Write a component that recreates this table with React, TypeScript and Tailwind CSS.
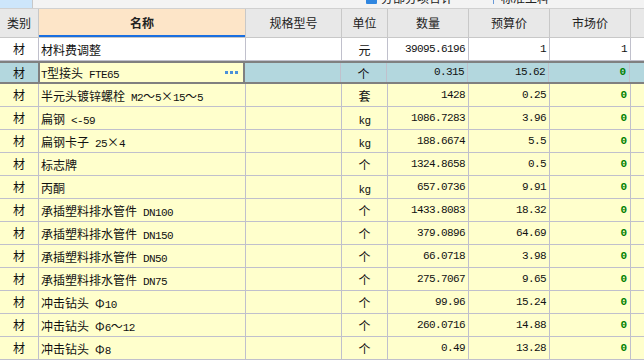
import React from "react";

const cjk = "font-['Noto_Sans_CJK_SC',sans-serif]";
const mono = "font-['Liberation_Mono','Noto_Sans_CJK_SC',monospace]";

type Row = {
  name: string;
  unit: string;
  qty: string;
  price: string;
  market: string;
  kind?: "white" | "sel";
};

const rows: Row[] = [
  { name: "材料费调整", unit: "元", qty: "39095.6196", price: "1", market: "1", kind: "white" },
  { name: "T型接头 FTE65", unit: "个", qty: "0.315", price: "15.62", market: "0", kind: "sel" },
  { name: "半元头镀锌螺栓 M2～5×15～5", unit: "套", qty: "1428", price: "0.25", market: "0" },
  { name: "扁钢 <-59", unit: "kg", qty: "1086.7283", price: "3.96", market: "0" },
  { name: "扁钢卡子 25×4", unit: "kg", qty: "188.6674", price: "5.5", market: "0" },
  { name: "标志牌", unit: "个", qty: "1324.8658", price: "0.5", market: "0" },
  { name: "丙酮", unit: "kg", qty: "657.0736", price: "9.91", market: "0" },
  { name: "承插塑料排水管件 DN100", unit: "个", qty: "1433.8083", price: "18.32", market: "0" },
  { name: "承插塑料排水管件 DN150", unit: "个", qty: "379.0896", price: "64.69", market: "0" },
  { name: "承插塑料排水管件 DN50", unit: "个", qty: "66.0718", price: "3.98", market: "0" },
  { name: "承插塑料排水管件 DN75", unit: "个", qty: "275.7067", price: "9.65", market: "0" },
  { name: "冲击钻头 Φ10", unit: "个", qty: "99.96", price: "15.24", market: "0" },
  { name: "冲击钻头 Φ6～12", unit: "个", qty: "260.0716", price: "14.88", market: "0" },
  { name: "冲击钻头 Φ8", unit: "个", qty: "0.49", price: "13.28", market: "0" },
];

function Mixed({ text }: { text: string }) {
  const parts = text.match(/[\x20-\x7e]+|[^\x20-\x7e]+/g) || [];
  return (
    <span className="whitespace-pre leading-none">
      {parts.map((p, i) =>
        /^[\x20-\x7e]+$/.test(p) ? (
          <span key={i} className={`${mono} text-[11px] tracking-[-0.6px]`}>
            {p}
          </span>
        ) : (
          <span key={i} className={`${cjk} text-[12px]`}>
            {p}
          </span>
        )
      )}
    </span>
  );
}

function DataRow({ r }: { r: Row }) {
  const sel = r.kind === "sel";
  const bg = r.kind === "white" ? "bg-white" : sel ? "bg-[#b3d7de]" : "bg-[#ffffcc]";
  const line = "border-[#c0c0cc]";
  const rowCls = sel ? "border-y-2 border-[#808080]" : `border-b ${line}`;
  const num = `${mono} text-[11px] tracking-[-0.6px] leading-none`;
  return (
    <div className={`flex h-[23px] ${bg} ${rowCls} text-[#111]`}>
      <div className={`w-[39px] shrink-0 border-r ${line} flex items-center justify-center ${cjk} text-[12px] leading-none`}>
        材
      </div>
      {sel ? (
        <div className="w-[207px] shrink-0 bg-[#ffffcc] border-x-2 border-[#808080] -ml-[1px] flex items-center pl-[1px] pr-[5px]">
          <Mixed text={r.name} />
          <div className="ml-auto flex gap-[2px] items-center">
            <span className="w-[3px] h-[3px] bg-[#4a90d9]" />
            <span className="w-[3px] h-[3px] bg-[#4a90d9]" />
            <span className="w-[3px] h-[3px] bg-[#4a90d9]" />
          </div>
        </div>
      ) : (
        <div className={`w-[207px] shrink-0 border-r ${line} flex items-center pl-[2px]`}>
          <Mixed text={r.name} />
        </div>
      )}
      <div className={`w-[96px] shrink-0 border-r ${line}`} />
      <div className={`w-[46px] shrink-0 border-r ${line} flex items-center justify-center`}>
        <Mixed text={r.unit} />
      </div>
      <div className={`w-[81px] shrink-0 border-r ${line} flex items-center justify-end pr-[3px] ${num}`}>
        {r.qty}
      </div>
      <div className={`w-[81px] shrink-0 border-r ${line} flex items-center justify-end pr-[3px] ${num}`}>
        {r.price}
      </div>
      <div
        className={`w-[81px] shrink-0 border-r ${line} flex items-center justify-end pr-[3px] ${mono} text-[11px] leading-none ${
          r.market === "0" ? "text-[#008000] font-bold" : "tracking-[-0.6px]"
        }`}
      >
        {r.market}
      </div>
      <div className="flex-1" />
    </div>
  );
}

export default function App() {
  const hline = "border-[#c8c8c8]";
  return (
    <div className="w-[644px] h-[361px] overflow-hidden bg-white">
      {/* top strip */}
      <div className="h-[9px] bg-[#f3f3f3] border-b border-[#d0d0d0] flex overflow-hidden">
        <div className="w-[33px] shrink-0 bg-[#cde6fb] border-r border-[#c8c8c8]" />
        <div className="ml-[333px] flex items-end -mt-[10px] h-[14px]">
          <span className="w-[11px] h-[11px] bg-[#2f86e0] rounded-[1px] mr-[4px]" />
          <span className={`${cjk} text-[12px] leading-none text-[#222]`}>分部分项合计</span>
        </div>
        <div className="ml-[40px] flex items-end -mt-[10px] h-[14px]">
          <span className="w-[1px] h-[10px] bg-[#6a9ad8] mr-[7px]" />
          <span className={`${cjk} text-[12px] leading-none text-[#222]`}>标准工料</span>
        </div>
      </div>
      {/* header */}
      <div className={`flex h-[29px] bg-[#e8e8e8] border-b ${hline} text-[#222] ${cjk} text-[12px]`}>
        <div className={`w-[39px] shrink-0 border-r ${hline} flex items-center justify-center`}>类别</div>
        <div className={`w-[207px] shrink-0 border-r ${hline} bg-[#fde5c8] flex items-center justify-center font-bold shadow-[inset_0_-2px_0_#1a6fe0]`}>
          名称
        </div>
        <div className={`w-[96px] shrink-0 border-r ${hline} flex items-center justify-center`}>规格型号</div>
        <div className={`w-[46px] shrink-0 border-r ${hline} flex items-center justify-center`}>单位</div>
        <div className={`w-[81px] shrink-0 border-r ${hline} flex items-center justify-center`}>数量</div>
        <div className={`w-[81px] shrink-0 border-r ${hline} flex items-center justify-center`}>预算价</div>
        <div className={`w-[81px] shrink-0 border-r ${hline} flex items-center justify-center`}>市场价</div>
        <div className="flex-1" />
      </div>
      {rows.map((r, i) => (
        <DataRow key={i} r={r} />
      ))}
    </div>
  );
}
